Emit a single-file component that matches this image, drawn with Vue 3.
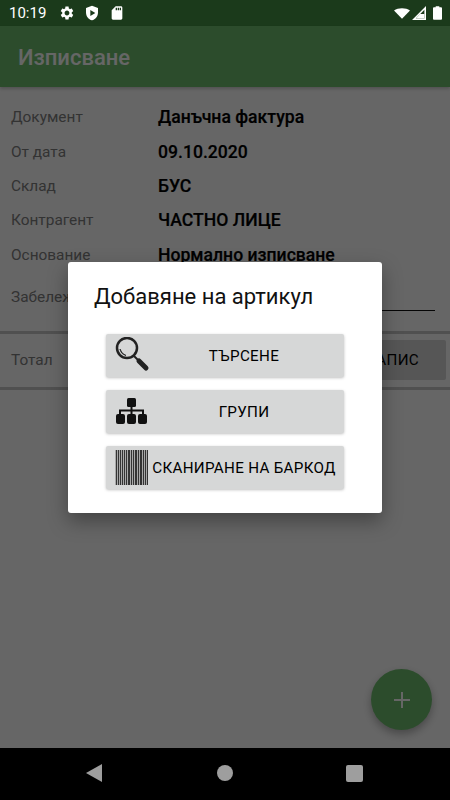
<template>
  <div class="phone">
    <div class="status-bar">
      <span class="clock">10:19</span>
      <svg class="st-icon gear" viewBox="0 0 24 24"><path d="M19.14 12.94c.04-.3.06-.61.06-.94 0-.32-.02-.64-.07-.94l2.03-1.58c.18-.14.23-.41.12-.61l-1.92-3.32c-.12-.22-.37-.29-.59-.22l-2.39.96c-.5-.38-1.03-.7-1.62-.94l-.36-2.54c-.04-.24-.24-.41-.48-.41h-3.84c-.24 0-.43.17-.47.41l-.36 2.54c-.59.24-1.13.57-1.62.94l-2.39-.96c-.22-.08-.47 0-.59.22L2.74 8.87c-.12.21-.08.47.12.61l2.03 1.58c-.05.3-.09.63-.09.94s.02.64.07.94l-2.03 1.58c-.18.14-.23.41-.12.61l1.92 3.32c.12.22.37.29.59.22l2.39-.96c.5.38 1.03.7 1.62.94l.36 2.54c.05.24.24.41.48.41h3.84c.24 0 .44-.17.47-.41l.36-2.54c.59-.24 1.13-.56 1.62-.94l2.39.96c.22.08.47 0 .59-.22l1.92-3.32c.12-.22.07-.47-.12-.61l-2.01-1.58zM12 15.6c-1.98 0-3.6-1.62-3.6-3.6s1.62-3.6 3.6-3.6 3.6 1.62 3.6 3.6-1.62 3.6-3.6 3.6z" /></svg>
      <svg class="st-icon shield" viewBox="0 0 24 24"><path fill-rule="evenodd" d="M12 1 3 4.500v6.600c0 5.600 3.800 10.400 9 11.900 5.200-1.500 9-6.300 9-11.900V4.500L12 1zM9.500 7.500v9l7.500-4.500-7.500-4.500z" /></svg>
      <svg class="st-icon sd" viewBox="0 0 24 24"><path d="M18 2h-8L4 8v12c0 1.100.9 2 2 2h12c1.100 0 2-.9 2-2V4c0-1.100-.9-2-2-2zm-6 6h-2V4h2v4zm3 0h-2V4h2v4zm3 0h-2V4h2v4z" /></svg>
      <span class="spacer"></span>
      <svg class="wifi" viewBox="0 0 24 16"><path d="M12 16 0 3.500C3.200 1.300 7.400 0 12 0s8.800 1.300 12 3.500L12 16z" /></svg>
      <svg class="signal" viewBox="0 0 14 14"><path fill-rule="evenodd" d="M14 0v14H0L14 0zm-1.600 3.800-8.600 8.600h8.600V3.800z" /><path d="M8 8h4.400v4.400H4z" /></svg>
      <svg class="battery" viewBox="0 0 10 15"><path d="M3 0h4v1.200h2c.6 0 1 .4 1 1V14c0 .6-.4 1-1 1H1c-.6 0-1-.4-1-1V2.200c0-.6.4-1 1-1h2V0z" /></svg>
    </div>

    <div class="screen">
      <header class="app-bar">Изписване</header>

      <main class="content">
        <div class="form">
          <div v-for="row in rows" :key="row.label" class="row">
            <span class="label">{{ row.label }}</span>
            <span class="value">{{ row.value }}</span>
          </div>
          <div class="row note-row">
            <span class="label">Забележка</span>
            <span class="note-input"></span>
          </div>
        </div>
        <div class="total-bar">
          <span class="label">Тотал</span>
          <button class="save-btn">ЗАПИС</button>
        </div>
        <button class="fab" aria-label="Добави">
          <svg viewBox="0 0 16 16"><path d="M7 0h2v7h7v2H9v7H7V9H0V7h7z" /></svg>
        </button>
      </main>

      <div class="scrim">
        <div class="dialog">
          <h3>Добавяне на артикул</h3>
          <div class="actions">
            <button class="action">
              <svg class="action-icon" viewBox="0 0 37 37">
                <circle cx="14" cy="11" r="10" fill="none" stroke="#222" stroke-width="2.500" />
                <path d="M7 12a8 8 0 0 0 6 6.500a10 10 0 0 1-6-6.500z" fill="#222" stroke="#222" stroke-width=".8" />
                <path d="M21 19l4 4" stroke="#222" stroke-width="2" />
                <path d="M26 24l7 7" stroke="#222" stroke-width="5" stroke-linecap="round" />
              </svg>
              <span>ТЪРСЕНЕ</span>
            </button>
            <button class="action">
              <svg class="action-icon" viewBox="0 0 37 37" fill="#111">
                <rect x="14" y="5" width="9" height="9" rx="1.500" />
                <rect x="3" y="21" width="9" height="10" rx="2" />
                <rect x="14" y="21" width="9" height="10" rx="2" />
                <rect x="25" y="21" width="9" height="10" rx="2" />
                <path d="M17.500 13h2v3.500H31V22h-2v-3.500h-9.500V22h-2v-3.500H8V22H6v-5.500h11.500z" />
              </svg>
              <span>ГРУПИ</span>
            </button>
            <button class="action">
              <svg class="action-icon" viewBox="0 0 37 37">
                <rect x="2" y="1" width="33" height="35" fill="#a8a8a8" />
                <rect v-for="bar in bars" :key="bar.x" :x="bar.x" y="1" :width="bar.w" height="35" fill="#333" />
              </svg>
              <span>СКАНИРАНЕ НА БАРКОД</span>
            </button>
          </div>
        </div>
      </div>
    </div>

    <nav class="nav-bar">
      <svg class="nav-back" viewBox="0 0 16 18"><path d="M16 0v18L0 9z" /></svg>
      <span class="nav-home"></span>
      <span class="nav-recent"></span>
    </nav>
  </div>
</template>

<script setup>
const rows = [
  { label: 'Документ', value: 'Данъчна фактура' },
  { label: 'От дата', value: '09.10.2020' },
  { label: 'Склад', value: 'БУС' },
  { label: 'Контрагент', value: 'ЧАСТНО ЛИЦЕ' },
  { label: 'Основание', value: 'Нормално изписване' },
];

const bars = [
  { x: 3, w: 1 }, { x: 5, w: 1 }, { x: 7, w: 1 }, { x: 9, w: 1 }, { x: 11, w: 1 },
  { x: 13, w: 1 }, { x: 15, w: 2 }, { x: 18, w: 1 }, { x: 20, w: 1 }, { x: 22, w: 2 },
  { x: 25, w: 1 }, { x: 27, w: 2 }, { x: 30, w: 1 }, { x: 32, w: 1 }, { x: 34, w: 1 },
];
</script>

<style>
html, body {
  margin: 0;
  background: #000;
}
</style>

<style scoped>
.phone {
  width: 450px;
  height: 800px;
  display: flex;
  flex-direction: column;
  overflow: hidden;
  font-family: Roboto, "Noto Sans", sans-serif;
  background: #fff;
}

.status-bar {
  height: 26px;
  flex: none;
  display: flex;
  align-items: center;
  padding: 0 8px 0 9px;
  box-sizing: border-box;
  background: #1b3a1b;
  color: #fff;
}

.clock {
  font-size: 15px;
  width: 50px;
}

.st-icon {
  width: 16px;
  height: 16px;
  fill: #fff;
}

.gear {
  margin-right: 9px;
}

.shield {
  margin-right: 9px;
}

.spacer {
  flex: 1;
}

.wifi {
  width: 16px;
  height: 11px;
  fill: #fff;
  margin-right: 2px;
}

.signal {
  width: 14px;
  height: 14px;
  fill: #fff;
  margin-right: 7px;
}

.battery {
  width: 9px;
  height: 14px;
  fill: #fff;
}

.screen {
  flex: 1;
  min-height: 0;
  position: relative;
  display: flex;
  flex-direction: column;
}

.app-bar {
  height: 61px;
  flex: none;
  display: flex;
  align-items: center;
  padding: 2px 0 0 18px;
  box-sizing: border-box;
  background: #6fbf6f;
  color: #fff;
  font-size: 22px;
  font-weight: 500;
  box-shadow: 0 2px 3px rgba(0, 0, 0, 0.2);
  position: relative;
  z-index: 1;
}

.content {
  flex: 1;
  position: relative;
  background: #fff;
}

.form {
  padding-top: 13px;
}

.row {
  height: 34.4px;
  display: flex;
  align-items: center;
  padding-left: 11px;
}

.label {
  width: 147px;
  flex: none;
  font-size: 15.4px;
  color: #808080;
}

.value {
  font-size: 17.6px;
  font-weight: 500;
  color: #000;
  -webkit-text-stroke: 0.2px #000;
}

.note-row {
  height: 62px;
  position: relative;
  align-items: flex-start;
  padding-top: 16px;
  box-sizing: border-box;
  border-bottom: 3px solid #c8c8c8;
}

.note-input {
  position: absolute;
  left: 158px;
  right: 15px;
  top: 38px;
  height: 1px;
  background: #111;
}

.total-bar {
  height: 56px;
  display: flex;
  align-items: center;
  justify-content: space-between;
  padding: 0 4px 0 11px;
  box-sizing: border-box;
  border-bottom: 3px solid #c8c8c8;
}

.save-btn {
  width: 106px;
  height: 40px;
  border: 0;
  border-radius: 2px;
  background: #d6d7d7;
  color: #000;
  font-family: inherit;
  font-size: 15.2px;
  font-weight: 400;
  letter-spacing: 0.3px;
}

.fab {
  position: absolute;
  right: 18px;
  bottom: 18px;
  width: 61px;
  height: 61px;
  border: 0;
  border-radius: 50%;
  background: #6fbf6f;
  display: flex;
  align-items: center;
  justify-content: center;
  box-shadow: 0 4px 8px rgba(0, 0, 0, 0.3);
}

.fab svg {
  width: 16px;
  height: 16px;
  fill: #fff;
}

.scrim {
  position: absolute;
  inset: 0;
  z-index: 2;
  background: rgba(0, 0, 0, 0.6);
}

.dialog {
  position: absolute;
  left: 68px;
  top: 236px;
  width: 314px;
  height: 251px;
  box-sizing: border-box;
  padding: 22px 38px 0;
  border-radius: 3px;
  background: #fff;
  box-shadow: 0 8px 20px rgba(0, 0, 0, 0.35);
}

.dialog h3 {
  margin: 0 0 24px -12px;
  font-size: 22px;
  line-height: 26px;
  font-weight: 400;
  color: #111;
}

.actions {
  display: flex;
  flex-direction: column;
  gap: 13px;
}

.action {
  height: 43px;
  padding: 0 6px 0 7px;
  display: flex;
  align-items: center;
  border: 0;
  border-radius: 2px;
  background: #d6d7d7;
  color: #000;
  font-family: inherit;
  font-size: 15.2px;
  font-weight: 400;
  letter-spacing: 0.3px;
  box-shadow: 0 1px 3px rgba(0, 0, 0, 0.25);
}

.action-icon {
  width: 37px;
  height: 37px;
  flex: none;
}

.action span {
  flex: 1;
  text-align: center;
  white-space: nowrap;
}

.nav-bar {
  height: 52px;
  flex: none;
  background: #000;
  display: flex;
  align-items: center;
  justify-content: space-between;
  padding: 0 87px 2px 86px;
  box-sizing: border-box;
}

.nav-back {
  width: 16px;
  height: 18px;
  fill: #9e9e9e;
}

.nav-home {
  width: 16px;
  height: 16px;
  border-radius: 50%;
  background: #9e9e9e;
  margin-left: 2px;
}

.nav-recent {
  width: 17px;
  height: 17px;
  border-radius: 2px;
  background: #9e9e9e;
}
</style>
